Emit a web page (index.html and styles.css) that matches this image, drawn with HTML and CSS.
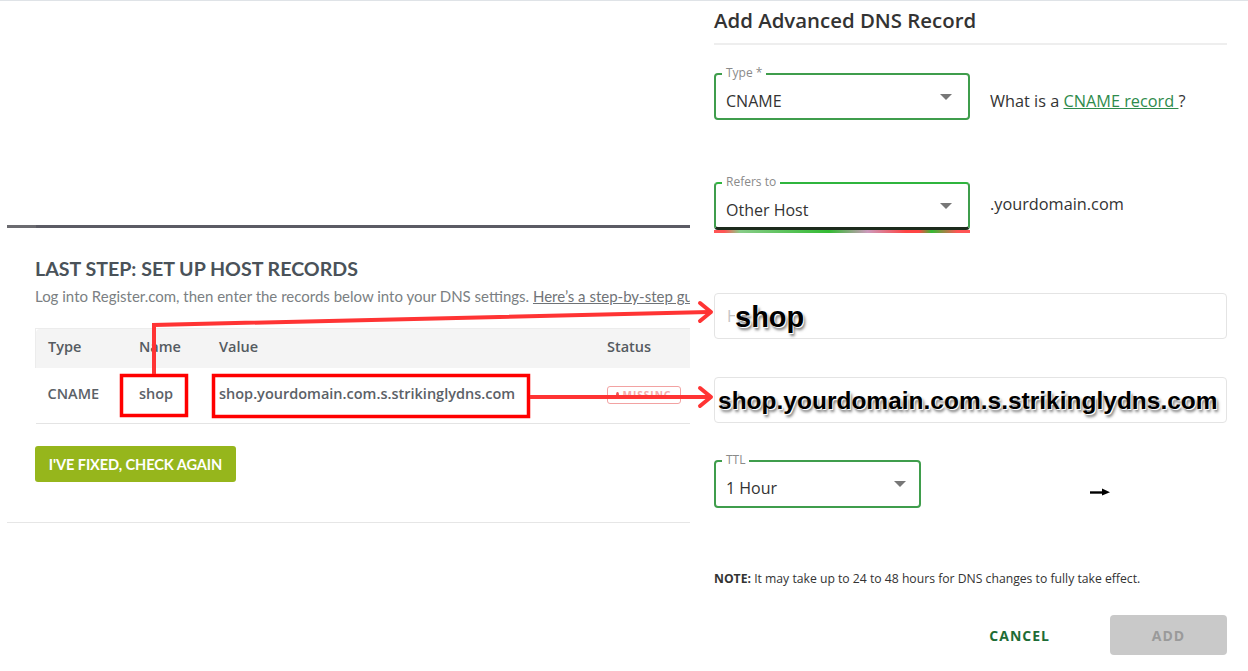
FILE: index.html
```html
<!DOCTYPE html>
<html lang="en">
<head>
  <meta charset="UTF-8">
  <title>Set up host records</title>
  <link rel="stylesheet" href="styles.css">
</head>
<body>

<div class="page">
  <div class="left">
    <div class="bar-dark"></div>
    <section class="records">
      <h2>LAST STEP: SET UP HOST RECORDS</h2>
      <p class="sub">Log into Register.com, then enter the records below into your DNS settings. <a href="#">Here’s a step-by-step guide</a></p>
      <table class="rec-table">
        <thead>
          <tr>
            <th class="c-type">Type</th>
            <th class="c-name">Name</th>
            <th class="c-value">Value</th>
            <th class="c-status">Status</th>
          </tr>
        </thead>
        <tbody>
          <tr>
            <td>CNAME</td>
            <td>shop</td>
            <td>shop.yourdomain.com.s.strikinglydns.com</td>
            <td><span class="badge"><i></i>MISSING</span></td>
          </tr>
        </tbody>
      </table>
      <button class="btn-check">I'VE FIXED, CHECK AGAIN</button>
    </section>
    <div class="bar-light"></div>
  </div>

  <div class="right">
    <h3>Add Advanced DNS Record</h3>

    <div class="row row-type">
      <div class="field">
        <label>Type *</label>
        <span class="val">CNAME</span>
        <span class="caret"></span>
      </div>
      <p class="hint">What is a <a href="#">CNAME record </a>?</p>
    </div>

    <div class="row row-refers">
      <div class="field refers">
        <label>Refers to</label>
        <span class="val">Other Host</span>
        <span class="caret"></span>
      </div>
      <p class="hint">.yourdomain.com</p>
    </div>

    <div class="box box-host">
      <span class="ph">H</span>
      <span class="paste paste-host">shop</span>
    </div>

    <div class="box box-value">
      <span class="paste paste-value">shop.yourdomain.com.s.strikinglydns.com</span>
    </div>

    <div class="row row-ttl">
      <div class="field ttl">
        <label>TTL</label>
        <span class="val">1 Hour</span>
        <span class="caret"></span>
      </div>
      <svg class="mini-arrow" width="22" height="8" viewBox="0 0 22 8">
        <path d="M1 4.5 H15" stroke="#000" stroke-width="2.4"/>
        <path d="M13 0.5 L21 4.3 L13 7.5 Z" fill="#000"/>
      </svg>
    </div>

    <p class="note"><b>NOTE:</b> It may take up to 24 to 48 hours for DNS changes to fully take effect.</p>

    <div class="actions">
      <a href="#" class="cancel">CANCEL</a>
      <button class="btn-add">ADD</button>
    </div>
  </div>
</div>

<!-- red annotation marks drawn over the screenshot -->
<svg class="marks" width="1248" height="671" viewBox="0 0 1248 671">
  <g fill="none" stroke-linejoin="miter">
    <rect x="121.5" y="375.5" width="65" height="40" stroke="#ff0000" stroke-width="3.5"/>
    <rect x="213.5" y="375.5" width="315" height="41" stroke="#ff0000" stroke-width="3.5"/>
    <polyline points="154,374 154,325 709,312" stroke="#ff3434" stroke-width="4"/>
    <polyline points="700,303 711,312 700,321" stroke="#ff3434" stroke-width="4" stroke-linecap="round" stroke-linejoin="round"/>
    <line x1="530" y1="397" x2="710" y2="397" stroke="#ff3434" stroke-width="4"/>
    <polyline points="700,388 711,397 700,406" stroke="#ff3434" stroke-width="4" stroke-linecap="round" stroke-linejoin="round"/>
  </g>
</svg>

</body>
</html>
```

FILE: styles.css
```css
body {
  margin: 0;
  background: #fff;
  font-family: "Open Sans", Arial, sans-serif;
  color: #333;
}
.page { display: flex; border-top: 1px solid #dfe3e7; height: 670px; overflow: hidden; }

/* left: host records */
.left { width: 683px; padding-left: 7px; overflow: hidden; flex: none; }
.bar-dark { margin-top: 224px; height: 3px; background: linear-gradient(to right, #6b6b70 0, #6b6b70 29px, #5b5b64 29px); }
.records { padding-left: 28px; }
.records h2 {
  font-family: Lato, sans-serif; font-weight: 700; font-size: 19.6px; line-height: 24px;
  color: #4a5259; margin: 29px 0 0;
}
.sub {
  font-family: Lato, sans-serif; font-size: 15px; line-height: 20px; color: #7b7f83;
  margin: 5px 0 0; white-space: nowrap;
}
.sub a { color: #6f7377; }

.rec-table { border-collapse: collapse; margin-top: 22px; width: 655px; font-size: 14.5px; }
.rec-table th {
  background: #f4f4f4; color: #555b61; font-weight: 600; text-align: left;
  height: 35px; padding: 0 0 4px 12px; border-top: 1px solid #ececec;
}
.rec-table th:first-child { border-top-left-radius: 4px; border-left: 1px solid #ececec; }
.rec-table td {
  color: #5b6167; font-weight: 600; height: 51px; padding: 0 0 4px 12px;
  border-bottom: 1px solid #e4e4e4;
}
.c-type { width: 79px; }
.c-name { width: 68px; }
.c-value { width: 376px; }
.badge {
  display: inline-flex; align-items: center; gap: 4px; height: 16px; padding: 0 8px;
  border: 1px solid #f2a2a2; border-radius: 3px; color: #f4a9a9;
  font-size: 10px; font-weight: 700; letter-spacing: 1px; width: 56px;
}
.badge i { width: 6px; height: 6px; border-radius: 50%; background: #e55; }

.btn-check {
  margin-top: 22px; width: 201px; height: 36px; border: none; border-radius: 3px;
  background: #96b61c; color: #fff; font-family: Lato, sans-serif; font-weight: 700;
  font-size: 14.6px; letter-spacing: -0.1px;
}
.bar-light { margin-top: 40px; height: 1px; background: #e6e6e6; }

/* right: DNS record form */
.right { flex: 1; padding: 0 21px 0 24px; }
.right h3 {
  font-size: 20.4px; font-weight: 600; line-height: 28px; color: #333;
  margin: 5px 0 0; padding-bottom: 9px; border-bottom: 2px solid #eeeeee;
}
.row { display: flex; align-items: center; }
.row-type { margin-top: 28px; }
.row-refers { margin-top: 62px; }
.row-ttl { margin-top: 37px; }
.field {
  position: relative; width: 242px; height: 43px; border: 2px solid #3f9d4c; border-radius: 4px;
  display: flex; align-items: center; padding: 0 0 0 10px; box-sizing: content-box; flex: none;
}
.field.ttl { width: 193px; height: 44px; }
.field label {
  position: absolute; top: -9px; left: 6px; background: #fff; padding: 0 4px;
  font-size: 12px; line-height: 14px; color: #8a8a8a;
}
.field .val { font-size: 16px; color: #333; padding-top: 8px; }
.caret {
  position: absolute; right: 16px; top: 19px;
  border-left: 6px solid transparent; border-right: 6px solid transparent; border-top: 6px solid #777;
}
.field.ttl .caret { right: 13px; }
.field.refers { border-top-color: #2fb53e; border-bottom: 3px solid #1d2a1d; }
.field.refers::after {
  content: ""; position: absolute; left: -2px; right: -2px; bottom: -6px; height: 3px;
  background: linear-gradient(to right, #f55 0, #f55 4%, #8c8 10%, #3b3 45%, #c9b 60%, #f44 75%, #f44 80%, #3b3 85%, #f55 95%);
}
.hint { margin: 0 0 0 20px; font-size: 16.3px; color: #333; padding-top: 8px; }
.hint a { color: #2e8b4c; }
.row-refers .hint { padding-top: 0; margin-top: -4px; }

.box {
  height: 44px; border: 1px solid #e4e4e4; border-radius: 4px;
  display: flex; align-items: center;
}
.box-host { margin-top: 63px; padding-left: 12px; }
.box-value { margin-top: 38px; padding-left: 3px; }
.ph { color: #c4c4c4; font-size: 16px; width: 8px; overflow: hidden; }
.paste {
  font-family: "Liberation Sans", Arial, sans-serif; font-weight: 700; color: #000;
  text-shadow: 1px 1px 0 #fff, 2px 3px 3px #777;
}
.paste-host { font-size: 29px; margin-left: 0; padding-top: 3px; }
.paste-value { font-size: 24.5px; padding-top: 2px; }

.mini-arrow { margin: 16px 0 0 168px; }

.note { margin: 62px 0 0; font-size: 12.2px; color: #333; }
.note b { font-weight: 700; }

.actions { display: flex; justify-content: flex-end; align-items: center; margin-top: 28px; }
.cancel {
  color: #1e6c36; font-weight: 700; font-size: 14px; letter-spacing: 1px; text-decoration: none;
  margin-right: 60px;
}
.btn-add {
  width: 117px; height: 40px; border: none; border-radius: 4px; background: #c9c9c9;
  color: #9a9a9a; font-family: "Open Sans", sans-serif; font-weight: 700; font-size: 14px; letter-spacing: 1px;
}

.marks { position: absolute; left: 0; top: 0; pointer-events: none; }
```
